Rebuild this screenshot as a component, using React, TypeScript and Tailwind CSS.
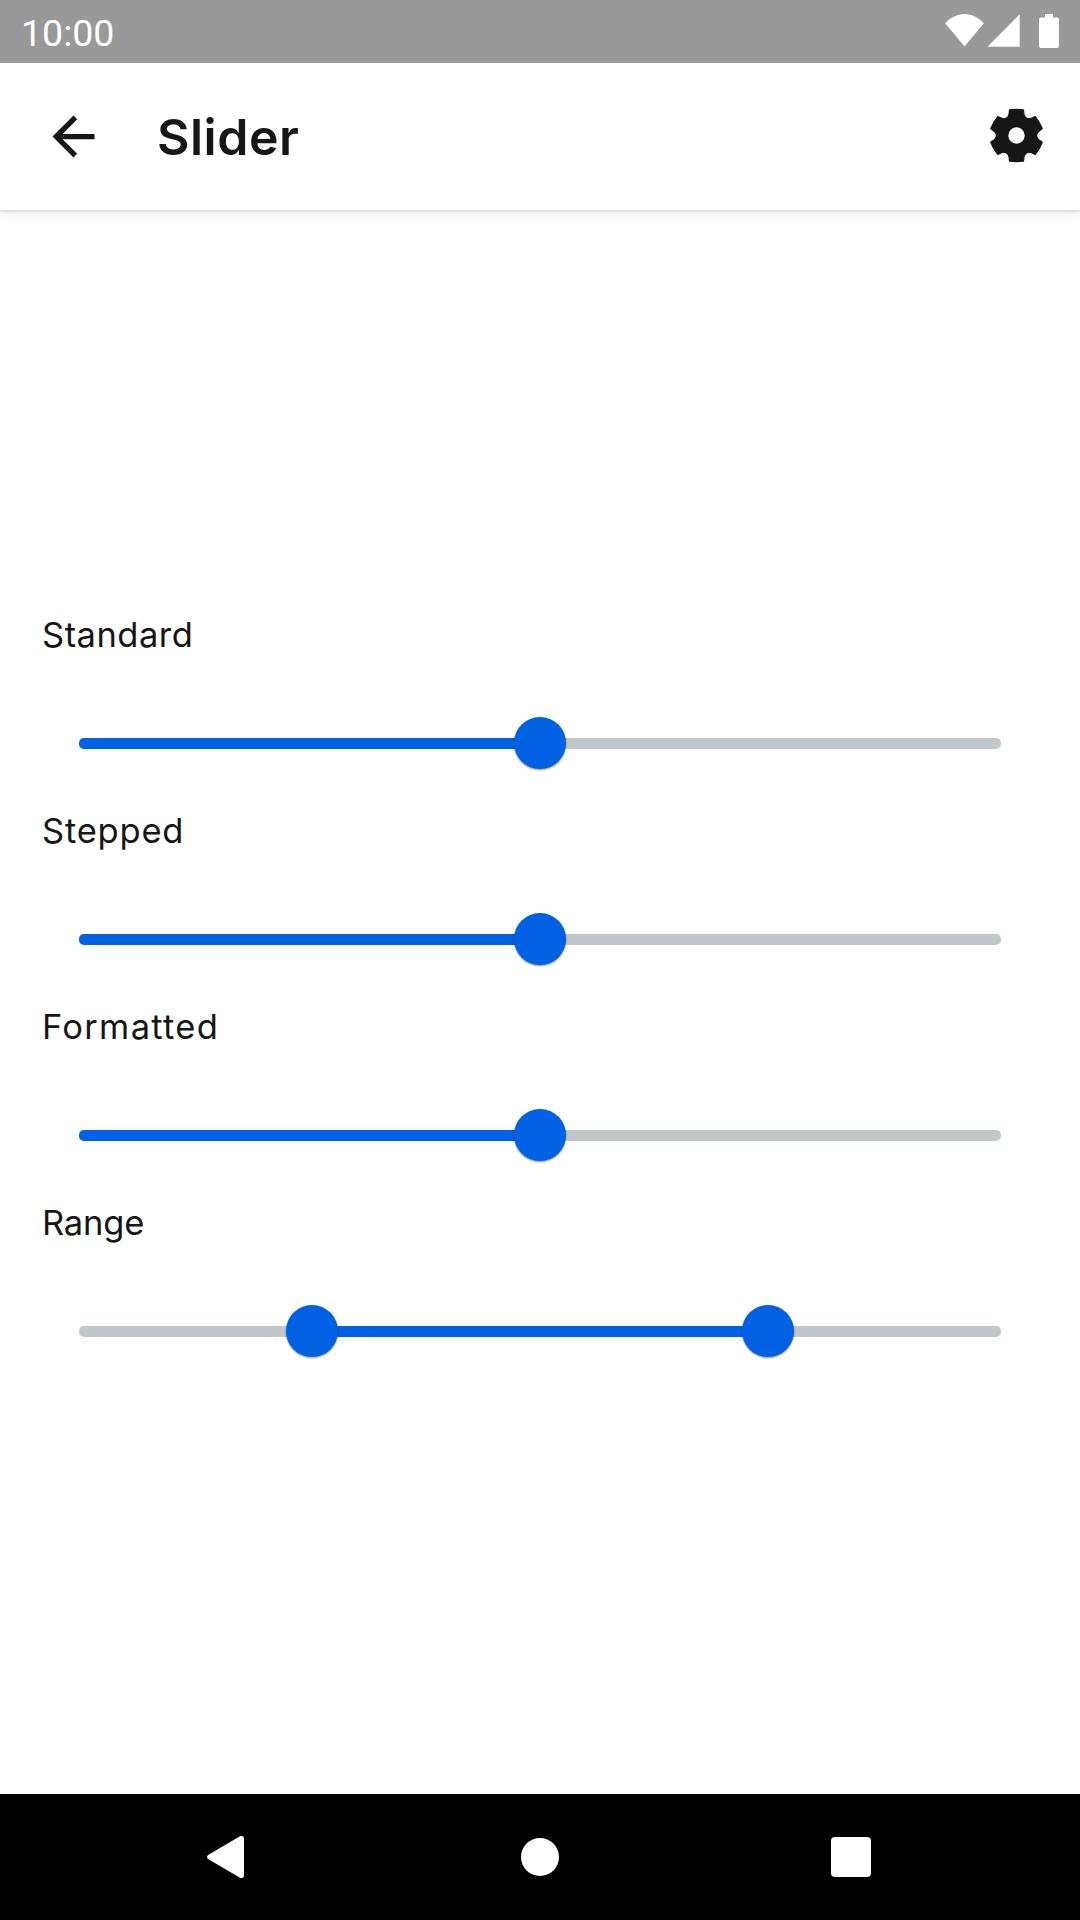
type Point = [number, number];

/* One notch of the gear, facing left; the outline repeats it six times. */
const NOTCH: Point[] = [
  [-25.7, 6.9], [-25.2, 5.6], [-20.1, 4.6], [-20.1, 0], [-20.1, -4.6], [-25.2, -5.6], [-25.7, -6.9],
];

function gearPath() {
  let d = "";
  for (let i = 0; i < 6; i++) {
    const a = (i * Math.PI) / 3;
    const at = (p: Point) =>
      `${(p[0] * Math.cos(a) - p[1] * Math.sin(a)).toFixed(2)} ${(p[0] * Math.sin(a) + p[1] * Math.cos(a)).toFixed(2)}`;
    const [start, c1, c2, mid, c3, c4, end] = NOTCH.map(at);
    d += i === 0 ? `M${start}` : `A50 50 0 0 1 ${start}`;
    d += `C${c1} ${c2} ${mid}C${c3} ${c4} ${end}`;
  }
  return d + `A50 50 0 0 1 ${NOTCH[0][0]} ${NOTCH[0][1]}ZM8.8 0A8.8 8.8 0 1 0 -8.8 0A8.8 8.8 0 1 0 8.8 0Z`;
}

function StatusBar() {
  return (
    <div className="relative z-10 flex h-[63px] items-start justify-between bg-[#999999] pl-[21px] pr-[21px] text-white">
      <span className="pt-[12px] font-[Roboto,sans-serif] text-[37.5px] leading-[42px]">10:00</span>
      <svg className="mt-[14px] h-[34px] w-[114px]" viewBox="945 14 114 34" fill="currentColor">
        <path d="M964.5 46.5L945.2 23.3C950 18 957 14 964.5 14S979 18 983.8 23.3Z" />
        <path d="M987.5 46.7H1019.7V14.2Z" />
        <path d="M1045 14H1053V17.5H1057Q1059 17.5 1059 19.5V46Q1059 48 1057 48H1041Q1039 48 1039 46V19.5Q1039 17.5 1041 17.5H1045Z" />
      </svg>
    </div>
  );
}

function AppBar() {
  return (
    <header className="flex h-[147px] items-center bg-white pl-[42px] pr-[36px] text-[#161616] shadow-[0_2px_3px_rgba(0,0,0,0.1),0_4px_12px_rgba(0,0,0,0.07)]">
      <svg className="size-[63px]" viewBox="0 0 24 24" fill="currentColor">
        <path d="M20 11H7.83l5.59-5.59L12 4l-8 8 8 8 1.41-1.41L7.83 13H20v-2z" />
      </svg>
      <h1 className="ml-[52px] flex-1 text-[50px] font-semibold leading-[60px] tracking-[0.5px]">Slider</h1>
      <svg className="-mt-[2px] size-[55px]" viewBox="-27.5 -27.5 55 55" fill="currentColor" fillRule="evenodd" stroke="currentColor" strokeWidth="1.2" strokeLinejoin="round">
        <path d={gearPath()} />
      </svg>
    </header>
  );
}

function Thumb({ at }: { at: number }) {
  return (
    <span
      className="absolute top-1/2 -mt-[26.5px] -ml-[26px] size-[52px] rounded-full bg-[#0061e3] shadow-[0_1px_2px_rgba(0,0,0,0.45)]"
      style={{ left: at }}
    />
  );
}

function SliderRow({ label, from, to, range = false, labelClass }: {
  label: string; from: number; to: number; range?: boolean; labelClass: string;
}) {
  return (
    <section className="h-[196px]">
      <div className={`pl-[42px] text-[34.5px] leading-[42px] ${labelClass}`}>{label}</div>
      <div className="relative mx-[79px] mt-[82px] h-[11px] rounded-[5px] bg-[#c1c8cb]">
        <div className={`h-full bg-[#0061e3] ${range ? "" : "rounded-l-[5px]"}`} style={{ marginLeft: from, width: to - from }} />
        {range && <Thumb at={from} />}
        <Thumb at={to} />
      </div>
    </section>
  );
}

export default function App() {
  return (
    <div className="flex h-[1920px] w-[1080px] flex-col overflow-hidden bg-white font-[Inter,sans-serif] text-[#161616]">
      <StatusBar />
      <AppBar />
      <main className="flex-1 pt-[404px]">
        <SliderRow label="Standard" from={0} to={461} labelClass="tracking-[0.5px]" />
        <SliderRow label="Stepped" from={0} to={461} labelClass="tracking-[0.8px]" />
        <SliderRow label="Formatted" from={0} to={461} labelClass="tracking-[1.3px]" />
        <SliderRow label="Range" from={233} to={689} range labelClass="tracking-[-0.2px]" />
      </main>
      <nav className="flex h-[126px] items-center bg-black text-white">
        <svg className="ml-[206px] h-[44px] w-[39px]" viewBox="0 0 39 44" fill="currentColor">
          <path d="M2 20L34 1.3Q38 0 38 4V40Q38 44 34 42.7L2 24Q0 22 2 20Z" />
        </svg>
        <span className="ml-[276px] size-[38px] rounded-full bg-white" />
        <span className="ml-[272px] size-[40px] rounded-[4px] bg-white" />
      </nav>
    </div>
  );
}
